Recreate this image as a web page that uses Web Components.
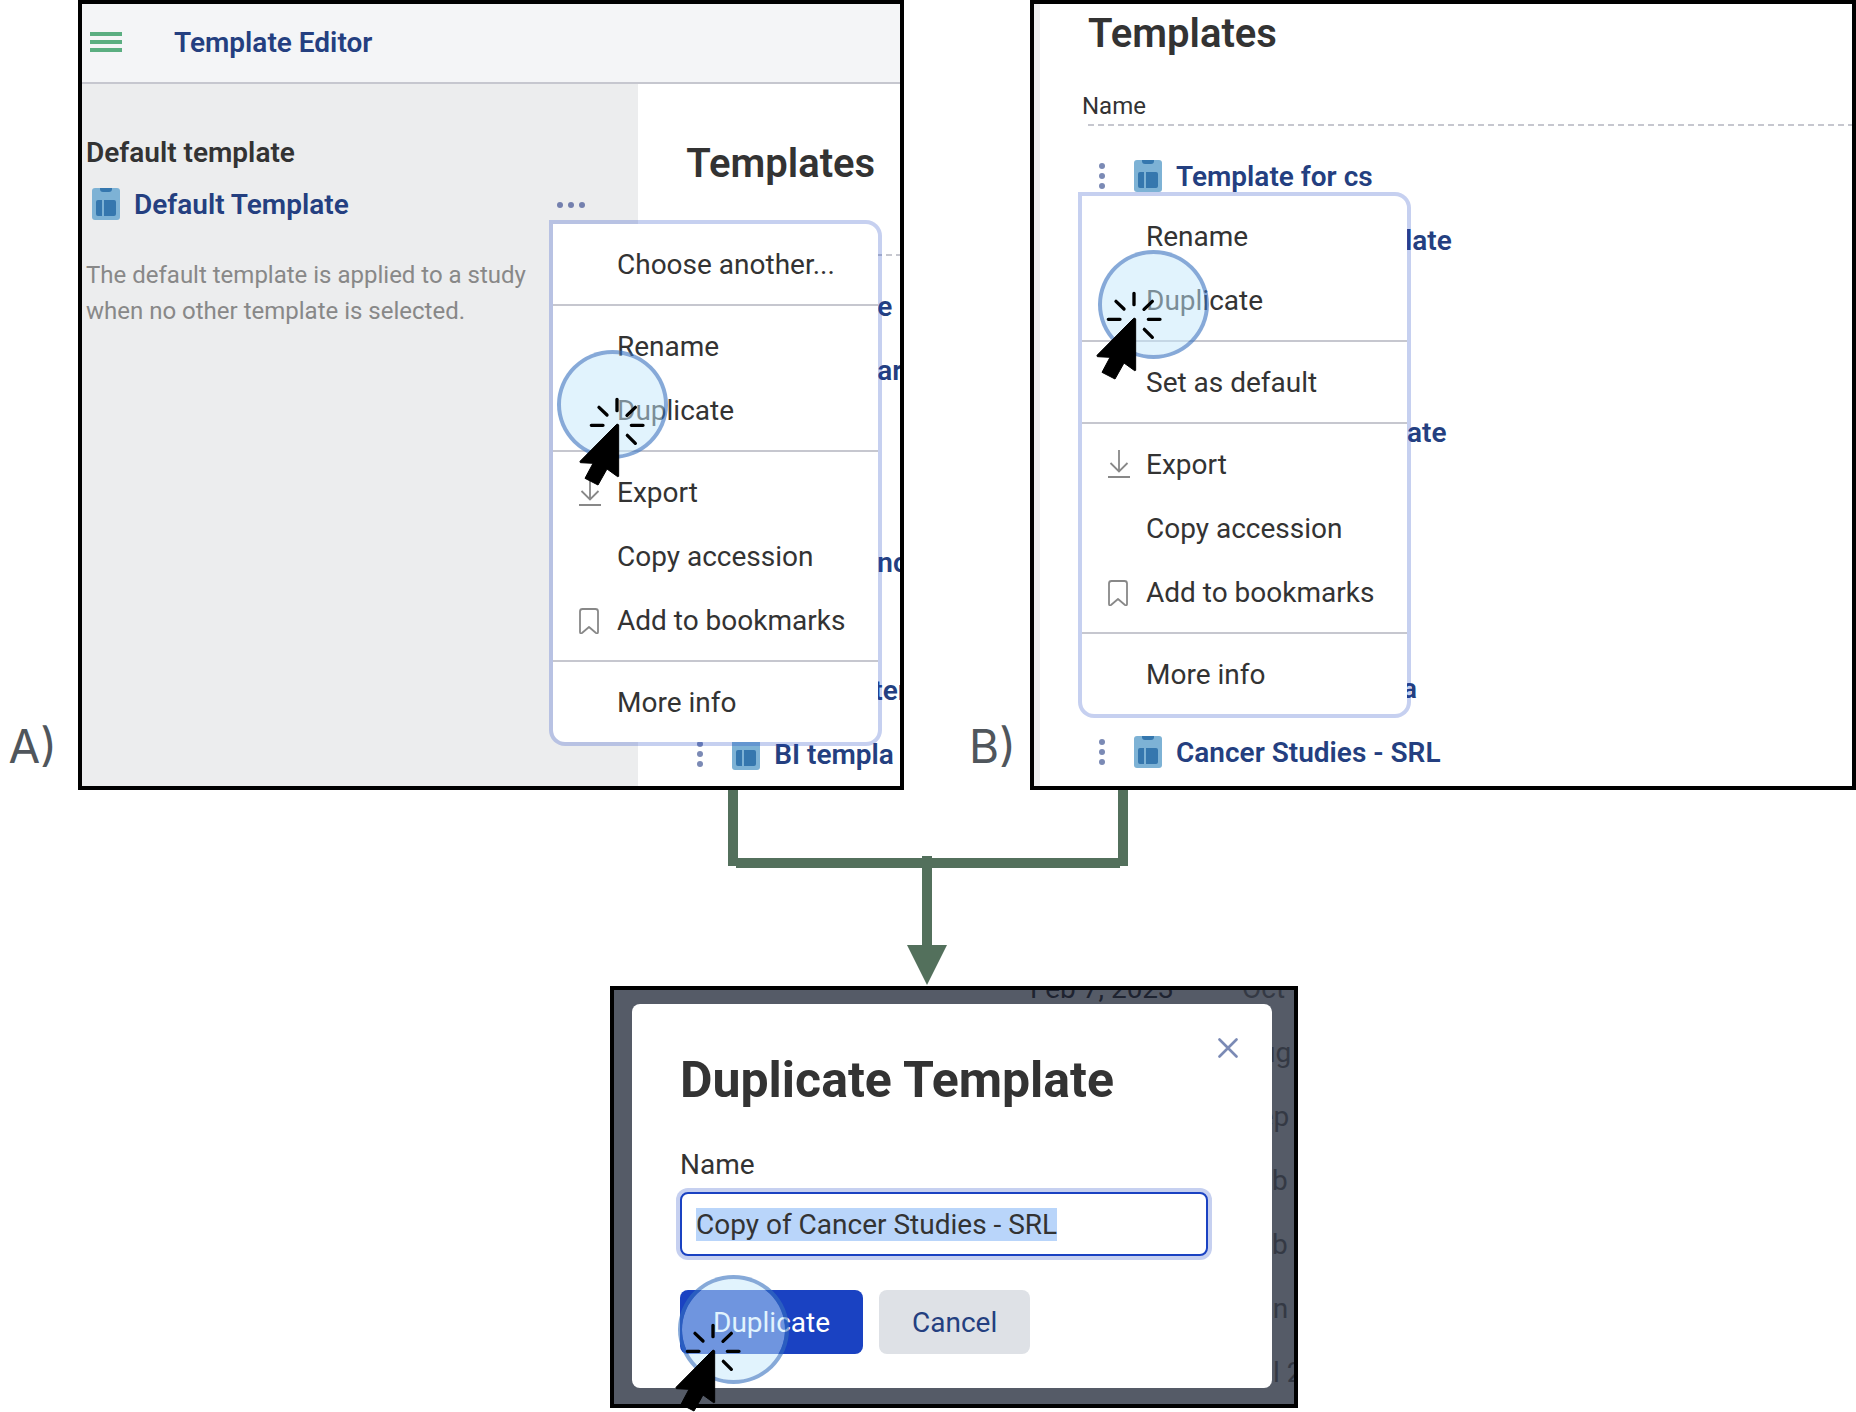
<!DOCTYPE html>
<html lang="en">
<head>
<meta charset="utf-8">
<title>Duplicate a template</title>
<style>
  html { background: #fff; }
  body { margin: 0; min-height: 100vh; overflow: hidden; font-family: Roboto, "Liberation Sans", sans-serif; font-size: 28px; color: #333; }
</style>
</head>
<body>
<guide-page></guide-page>

<script>
const define = (name, html, setup) => {
  const template = document.createElement('template');
  template.innerHTML = html;
  customElements.define(name, class extends HTMLElement {
    constructor() {
      super();
      this.attachShadow({ mode: 'open' }).append(template.content.cloneNode(true));
    }
    connectedCallback() { if (setup) setup(this, this.shadowRoot); }
  });
};

const ICONS = {
  menu: [32, 20, '<path d="M0 2h32M0 10h32M0 18h32" stroke="#5bae81" stroke-width="4"/>'],
  template: [28, 32, '<rect width="28" height="32" rx="3" fill="#7db2d5"/><path d="M8 0h12v1q0 3-3 3h-6q-3 0-3-3z" fill="#3577ae"/><path d="M6 12h4v16h-4q-2 0-2-2v-12q0-2 2-2zM12 12h10q2 0 2 2v12q0 2-2 2h-10z" fill="#3577ae"/>'],
  dots: [28, 6, '<g fill="#7480ae"><circle cx="3" cy="3" r="3"/><circle cx="14" cy="3" r="3"/><circle cx="25" cy="3" r="3"/></g>'],
  kebab: [12, 26, '<g fill="#7b8ab5"><circle cx="6" cy="3" r="3"/><circle cx="6" cy="13" r="3"/><circle cx="6" cy="23" r="3"/></g>'],
  download: [22, 28, '<path d="M11 0v21.5M2.5 13l8.500 8.500L19.500 13M0 27h22" fill="none" stroke="#888" stroke-width="1.800"/>'],
  bookmark: [22, 28, '<path d="M3.500 3h13q2.500 0 2.500 2.500v20.500q0 2-2 1l-7-6-7 6q-2 1-2-1v-20.500q0-2.500 2.500-2.500z" fill="none" stroke="#888" stroke-width="1.800" stroke-linejoin="round"/>'],
  close: [20, 20, '<path d="M1.500 1.500l17 17M18.500 1.500l-17 17" stroke="#7b8ab5" stroke-width="2.600" stroke-linecap="round"/>'],
  none: [22, 28, '']
};

define('ui-icon', `<style>:host{display:block;flex:none}svg{display:block}</style>`, (el, root) => {
  const [w, h, body] = ICONS[el.getAttribute('name')];
  root.innerHTML += `<svg width="${w}" height="${h}" viewBox="0 0 ${w} ${h}" aria-hidden="true">${body}</svg>`;
});

/* Highlight circle plus clicking cursor */
define('click-marker', `
<style>
  :host { position: absolute; inset: 0; pointer-events: none; z-index: 3; }
  i, svg { position: absolute; }
  i { box-sizing: border-box; width: 111px; height: 109px; left: var(--cx); top: var(--cy); border-radius: 50%;
      background: rgba(195,231,251,.5) padding-box; border: 4px solid rgba(53,112,190,.6); }
  svg { left: var(--px); top: var(--py); width: 67px; height: 90px; }
</style>
<i></i>
<svg viewBox="100 172 201 270" aria-hidden="true">
  <path d="M216 254L106 365L107 369L145 371L121 416L160 436L187 388L219 411L222 410V256Q220 252 216 254Z" stroke="#000" stroke-width="3" stroke-linejoin="round"/>
  <path d="M217 179v34M163 203l24 23M247 227l25-24M140 257h35M260 257h35M248 287l24 24" fill="none" stroke="#000" stroke-width="10" stroke-linecap="round"/>
</svg>`);

define('menu-item', `
<style>
  :host { display: block; }
  button { display: flex; align-items: center; gap: 16px; width: 100%; height: 64px; padding: 0 0 0 26px; border: 0; background: none; font: inherit; color: #333; white-space: nowrap; text-align: left; }
</style>
<button type="button"><span id="icon"></span><slot></slot></button>`, (el, root) => {
  root.getElementById('icon').innerHTML = `<ui-icon name="${el.getAttribute('icon') || 'none'}"></ui-icon>`;
});

define('context-menu', `
<style>
  :host { position: absolute; z-index: 2; left: var(--x); top: var(--y); box-sizing: border-box; width: 333px; padding: 8px 0;
    background: #fff padding-box; border: 4px solid rgba(27,68,194,.25); border-radius: 0 16px 16px 16px; }
  ::slotted(hr) { margin: 8px 0; border: 0; height: 2px; background: #c6c7cf; }
</style><slot></slot>`);

define('template-row', `
<style>
  :host { display: flex; align-items: center; height: 64px; padding-left: 56px; white-space: nowrap; }
  button { display: block; border: 0; padding: 0; margin: 0 26px 0 0; background: none; }
  a { color: #243f80; font-weight: 600; text-decoration: none; margin-left: calc(14px + var(--skip, 0px)); }
</style>
<button type="button" aria-label="Actions"><ui-icon name="kebab"></ui-icon></button><ui-icon name="template"></ui-icon><a href="#"><slot></slot></a>`);

define('template-list', `
<style>
  :host { display: block; overflow: hidden; min-width: 0; background: #fff; }
  h2 { margin: 0 0 0 48px; font-size: 40px; line-height: 48px; font-weight: 600; white-space: nowrap; }
  .label { height: 32px; line-height: 32px; margin: 32px 0 2px 42px; font-size: 24px; }
  .rule { margin: 0 0 18px 48px; height: 2px; background: repeating-linear-gradient(90deg, #c6c7cf 0 6px, transparent 6px 10px); }
</style>
<h2>Templates</h2><div class="label"><slot name="label"></slot></div><div class="rule"></div><slot></slot>`);

define('editor-header', `
<style>
  :host { display: flex; align-items: center; gap: 52px; height: 76px; padding: 0 0 2px 8px; background: #f4f5f7; border-bottom: 2px solid #c6c7cf; }
  button { border: 0; padding: 0; background: none; }
  a { color: #243f80; font-weight: 600; text-decoration: none; }
</style>
<button type="button" aria-label="Menu"><ui-icon name="menu"></ui-icon></button><a href="#"><slot></slot></a>`);

define('default-sidebar', `
<style>
  :host { display: block; padding: 49px 53px 0 4px; background: #ecedee; }
  h3 { margin: 0 0 15px; font-size: 28px; line-height: 40px; font-weight: 600; }
  .row { display: flex; align-items: center; height: 32px; padding-left: 6px; }
  a { margin-left: 14px; color: #243f80; font-weight: 600; text-decoration: none; }
  button { margin-left: auto; border: 0; padding: 2px 0 0; background: none; }
  p { margin: 37px 0 0; padding-right: 16px; font-size: 24px; line-height: 36px; color: #888; }
</style>
<h3>Default template</h3>
<div class="row"><ui-icon name="template"></ui-icon><a href="#">Default Template</a><button type="button" aria-label="More"><ui-icon name="dots"></ui-icon></button></div>
<p>The default template is applied to a study when no other template is selected.</p>`);

define('figure-panel', `
<style>
  :host { display: block; position: relative; box-sizing: border-box; border: 4px solid #000; min-width: 0; }
</style><slot></slot>`);

define('flow-arrow', `
<style>:host{display:block}svg{display:block;width:100%;height:196px}</style>
<svg viewBox="0 790 1856 196" aria-hidden="true" fill="#53705c">
  <path d="M728 790h10v68h380v-68h10v76h-8v2H932v77h15l-20 40-20-40h15v-77H736v-2h-8z"/><path d="M922 856h10v4h-10z"/>
</svg>`);

define('duplicate-dialog', `
<style>
  :host { display: block; position: relative; z-index: 1; background: #fff; border-radius: 8px; padding: 48px 64px 34px 48px; }
  h1 { margin: 0; font-size: 50px; line-height: 56px; font-weight: 700; white-space: nowrap; }
  .close { position: absolute; top: 34px; right: 34px; border: 0; padding: 0; background: none; }
  label { display: block; margin: 37px 0 7px; line-height: 40px; }
  input { box-sizing: border-box; display: block; width: 100%; height: 64px; padding: 0 14px; border: 2px solid #1a42c2; border-radius: 8px; outline: 0;
    box-shadow: 0 0 0 4px #c6d0f0; font: inherit; line-height: 40px; color: #333; background: #fff; }
  input::selection { background: #b9d5fa; color: #333; }
  .actions { display: flex; gap: 16px; margin-top: 34px; }
  .actions button { height: 64px; padding: 0 33px; border: 0; border-radius: 8px; font: inherit; background: #dee1e6; color: #243f80; }
  .actions .primary { background: #1a42c2; color: #fff; }
</style>
<button class="close" type="button" aria-label="Close"><ui-icon name="close"></ui-icon></button>
<h1>Duplicate Template</h1>
<label for="name">Name</label>
<input id="name" type="text" value="Copy of Cancer Studies - SRL" spellcheck="false">
<div class="actions"><button class="primary" type="button">Duplicate</button><button type="button">Cancel</button></div>`, (el, root) => {
  const input = root.getElementById('name');
  input.focus({ preventScroll: true });
  input.select();
});

define('date-backdrop', `
<style>
  :host { position: absolute; inset: 0; overflow: hidden; background: #555b67; }
  div { position: absolute; top: -33px; white-space: nowrap; line-height: 64px; }
  .first { left: 416px; color: #1e2330; }
  .second { left: 628px; color: #343944; }
  span { display: block; }
</style>
<div class="first"><span>Feb 7, 2023</span></div>
<div class="second"><span>Oct</span><span>Aug</span><span>Sep</span><span>Feb</span><span>Feb</span><span>Jan</span><span>Jul 2</span></div>`);

define('guide-page', `
<style>
  :host { display: block; }
  .steps { display: grid; grid-template-columns: 78px minmax(0, 1fr) 126px minmax(0, 1fr); align-items: stretch; }
  .caption { align-self: end; font: 46px/56px Inter, sans-serif; color: #50565c; padding: 0 21px 16px 0; text-align: right; }
  .caption.second { padding-right: 14px; }
  .editor { display: grid; grid-template-columns: 68% minmax(0, 1fr); }
  .editor template-list { padding-top: 56px; }
  .library { height: 100%; box-sizing: border-box; border-left: 6px solid #ecedee; }
  .library template-list { padding-top: 6px; }
  .result { width: 688px; margin-left: 610px; padding: 14px 22px 16px 18px; }
</style>
<div class="steps">
  <div class="caption">A)</div>
  <figure-panel>
    <editor-header>Template Editor</editor-header>
    <div class="editor">
      <default-sidebar></default-sidebar>
      <template-list>
        <template-row style="--skip:103px">e</template-row>
        <template-row style="--skip:103px">ar</template-row>
        <template-row></template-row>
        <template-row></template-row>
        <template-row style="--skip:103px">nc</template-row>
        <template-row></template-row>
        <template-row style="--skip:99px">ter</template-row>
        <template-row>BI templa</template-row>
      </template-list>
    </div>
    <context-menu style="--x:467px;--y:216px">
      <menu-item>Choose another...</menu-item><hr>
      <menu-item>Rename</menu-item><menu-item>Duplicate</menu-item><hr>
      <menu-item icon="download">Export</menu-item><menu-item>Copy accession</menu-item><menu-item icon="bookmark">Add to bookmarks</menu-item><hr>
      <menu-item>More info</menu-item>
    </context-menu>
    <click-marker style="--cx:475px;--cy:346px;--px:496px;--py:393px"></click-marker>
  </figure-panel>
  <div class="caption second">B)</div>
  <figure-panel>
    <div class="library">
      <template-list>
        <span slot="label">Name</span>
        <template-row>Template for cs</template-row>
        <template-row style="--skip:229px">late</template-row>
        <template-row></template-row>
        <template-row></template-row>
        <template-row style="--skip:231px">ate</template-row>
        <template-row></template-row>
        <template-row></template-row>
        <template-row></template-row>
        <template-row style="--skip:226px">a</template-row>
        <template-row>Cancer Studies - SRL</template-row>
      </template-list>
    </div>
    <context-menu style="--x:44px;--y:188px">
      <menu-item>Rename</menu-item><menu-item>Duplicate</menu-item><hr>
      <menu-item>Set as default</menu-item><hr>
      <menu-item icon="download">Export</menu-item><menu-item>Copy accession</menu-item><menu-item icon="bookmark">Add to bookmarks</menu-item><hr>
      <menu-item>More info</menu-item>
    </context-menu>
    <click-marker style="--cx:64px;--cy:246px;--px:61px;--py:287px"></click-marker>
  </figure-panel>
</div>
<flow-arrow></flow-arrow>
<figure-panel class="result">
  <date-backdrop></date-backdrop>
  <duplicate-dialog></duplicate-dialog>
  <click-marker style="--cx:64px;--cy:285px;--px:60px;--py:333px"></click-marker>
</figure-panel>`);
</script>
</body>
</html>
